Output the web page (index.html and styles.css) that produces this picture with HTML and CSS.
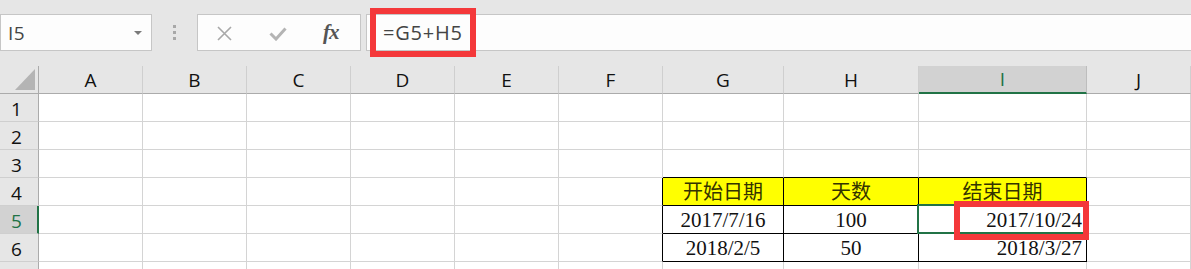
FILE: index.html
```html
<!DOCTYPE html>
<html>
<head>
<meta charset="utf-8">
<link rel="stylesheet" href="styles.css">
</head>
<body>
<div class="toolbar">
  <div class="namebox"><span class="nbtext">I5</span><span class="caret"></span></div>
  <div class="grip"><i></i><i></i><i></i></div>
  <div class="fxbox">
    <svg class="ic-x" width="15" height="15" viewBox="0 0 15 15"><path d="M1 1L14 14M14 1L1 14" stroke="#a8a8a8" stroke-width="1.6" fill="none"/></svg>
    <svg class="ic-ok" width="18" height="14" viewBox="0 0 18 14"><path d="M1.5 6.5L7 12L16.5 1.5" stroke="#b4b4b4" stroke-width="3" fill="none"/></svg>
    <span class="fx">fx</span>
  </div>
  <div class="formula">
    <span class="ftext">=G5+H5</span>
    <div class="redbox rb1"></div>
  </div>
</div>
<div class="sheet">
  <div class="corner"><span class="tri"></span></div>
  <div class="ch">A</div><div class="ch">B</div><div class="ch">C</div><div class="ch">D</div><div class="ch">E</div><div class="ch">F</div><div class="ch">G</div><div class="ch">H</div><div class="ch sel">I</div><div class="ch">J</div>

  <div class="rh">1</div><div class="c"></div><div class="c"></div><div class="c"></div><div class="c"></div><div class="c"></div><div class="c"></div><div class="c"></div><div class="c"></div><div class="c"></div><div class="c"></div>
  <div class="rh">2</div><div class="c"></div><div class="c"></div><div class="c"></div><div class="c"></div><div class="c"></div><div class="c"></div><div class="c"></div><div class="c"></div><div class="c"></div><div class="c"></div>
  <div class="rh">3</div><div class="c"></div><div class="c"></div><div class="c"></div><div class="c"></div><div class="c"></div><div class="c"></div><div class="c bb"></div><div class="c bb"></div><div class="c bb"></div><div class="c"></div>
  <div class="rh">4</div><div class="c"></div><div class="c"></div><div class="c"></div><div class="c"></div><div class="c"></div><div class="c br"></div><div class="c t yel ctr">开始日期</div><div class="c t yel ctr">天数</div><div class="c t yel ctr">结束日期</div><div class="c"></div>
  <div class="rh rsel">5</div><div class="c"></div><div class="c"></div><div class="c"></div><div class="c"></div><div class="c"></div><div class="c br"></div><div class="c t ctr">2017/7/16</div><div class="c t ctr">100</div><div class="c t rgt active">2017/10/24<div class="selbox"></div><div class="redbox rb2"></div></div><div class="c"></div>
  <div class="rh">6</div><div class="c"></div><div class="c"></div><div class="c"></div><div class="c"></div><div class="c"></div><div class="c br"></div><div class="c t ctr">2018/2/5</div><div class="c t ctr">50</div><div class="c t rgt">2018/3/27</div><div class="c"></div>
  <div class="rh"></div><div class="c"></div><div class="c"></div><div class="c"></div><div class="c"></div><div class="c"></div><div class="c"></div><div class="c"></div><div class="c"></div><div class="c"></div><div class="c"></div>
</div>
</body>
</html>
```
FILE: styles.css
```css
* { box-sizing: border-box; }
html, body { margin: 0; padding: 0; }
body {
  width: 1191px;
  height: 269px;
  overflow: hidden;
  background: #e6e6e6;
  font-family: "Open Sans", "Noto Sans", "Liberation Sans", sans-serif;
}
.toolbar {
  height: 66px;
  padding-top: 14px;
  display: flex;
  align-items: flex-start;
}
.namebox {
  width: 152px;
  height: 37px;
  background: #fdfdfd;
  border: 1px solid #c6c6c6;
  display: flex;
  align-items: center;
  justify-content: space-between;
  padding: 0 9px 0 7px;
}
.nbtext {
  font-size: 19px;
  color: #444;
  letter-spacing: 0.5px;
}
.caret {
  width: 0;
  height: 0;
  border-left: 4px solid transparent;
  border-right: 4px solid transparent;
  border-top: 4px solid #7a7a7a;
}
.grip {
  width: 45px;
  height: 37px;
  display: flex;
  flex-direction: column;
  align-items: center;
  justify-content: center;
  gap: 3px;
}
.grip i {
  display: block;
  width: 3px;
  height: 3px;
  background: #a8a8a8;
}
.fxbox {
  width: 164px;
  height: 37px;
  background: #fdfdfd;
  border: 1px solid #c6c6c6;
  display: flex;
  align-items: center;
  padding-left: 19px;
}
.ic-x { margin-top: 1px; }
.ic-ok { margin-left: 37px; margin-top: 3px; }
.fx {
  margin-left: 36px;
  font-family: "Liberation Serif", serif;
  font-style: italic;
  font-weight: bold;
  font-size: 21px;
  color: #555;
  letter-spacing: -1px;
}
.formula {
  position: relative;
  margin-left: 5px;
  flex: 1;
  height: 37px;
  background: #fdfdfd;
  border: 1px solid #c6c6c6;
  border-right: none;
  display: flex;
  align-items: center;
  padding-left: 16px;
}
.ftext {
  font-size: 20px;
  color: #444;
  letter-spacing: 0.8px;
}
.redbox {
  position: absolute;
  border: 6px solid #f4383a;
}
.rb1 { left: 3px; top: -7px; width: 106px; height: 49px; }

.sheet {
  display: grid;
  grid-template-columns: 39px repeat(6, 104px) 121px 135px 168px 104px;
  grid-template-rows: 28px repeat(7, 28px);
  background: #fff;
  height: 203px;
  overflow: hidden;
}
.corner {
  background: #e6e6e6;
  border-right: 1px solid #ababab;
  border-bottom: 1px solid #ababab;
  position: relative;
}
.tri {
  position: absolute;
  left: 15px;
  top: 3px;
  width: 0;
  height: 0;
  border-left: 20px solid transparent;
  border-bottom: 21px solid #b4b4b4;
}
.ch {
  background: #e6e6e6;
  border-right: 1px solid #cfcfcf;
  border-bottom: 1px solid #ababab;
  display: flex;
  align-items: center;
  justify-content: center;
  font-size: 19px;
  color: #111;
}
.ch.sel {
  background: #d2d2d2;
  color: #217346;
  border-bottom: 2px solid #217346;
  border-right-color: #bdbdbd;
}
.rh {
  background: #e6e6e6;
  border-right: 1px solid #ababab;
  border-bottom: 1px solid #cfcfcf;
  display: flex;
  align-items: center;
  justify-content: center;
  padding-right: 5px;
  padding-top: 2px;
  font-size: 19px;
  color: #111;
}
.rh.rsel {
  background: #d2d2d2;
  color: #217346;
  border-right: 2px solid #217346;
  padding-right: 4px;
}
.c {
  border-right: 1px solid #d4d4d4;
  border-bottom: 1px solid #d4d4d4;
}
.c.bb { border-bottom-color: #000; }
.c.br { border-right-color: #000; }
.c.t {
  border-right-color: #000;
  border-bottom-color: #000;
  display: flex;
  align-items: flex-end;
  padding-bottom: 1px;
  font-family: "Liberation Serif", "Noto Sans CJK SC", serif;
  font-size: 21px;
  line-height: 24px;
  color: #111;
}
.c.yel {
  background: #ffff00;
  color: #333300;
  font-size: 20px;
}
.ctr { justify-content: center; }
.rgt { justify-content: flex-end; padding-right: 4px; }
.active { position: relative; }
.selbox {
  position: absolute;
  left: -2px;
  top: -2px;
  right: -1px;
  bottom: -1px;
  border: 2px solid #217346;
}
.rb2 { left: 35px; top: -5px; width: 135px; height: 39px; }
```
